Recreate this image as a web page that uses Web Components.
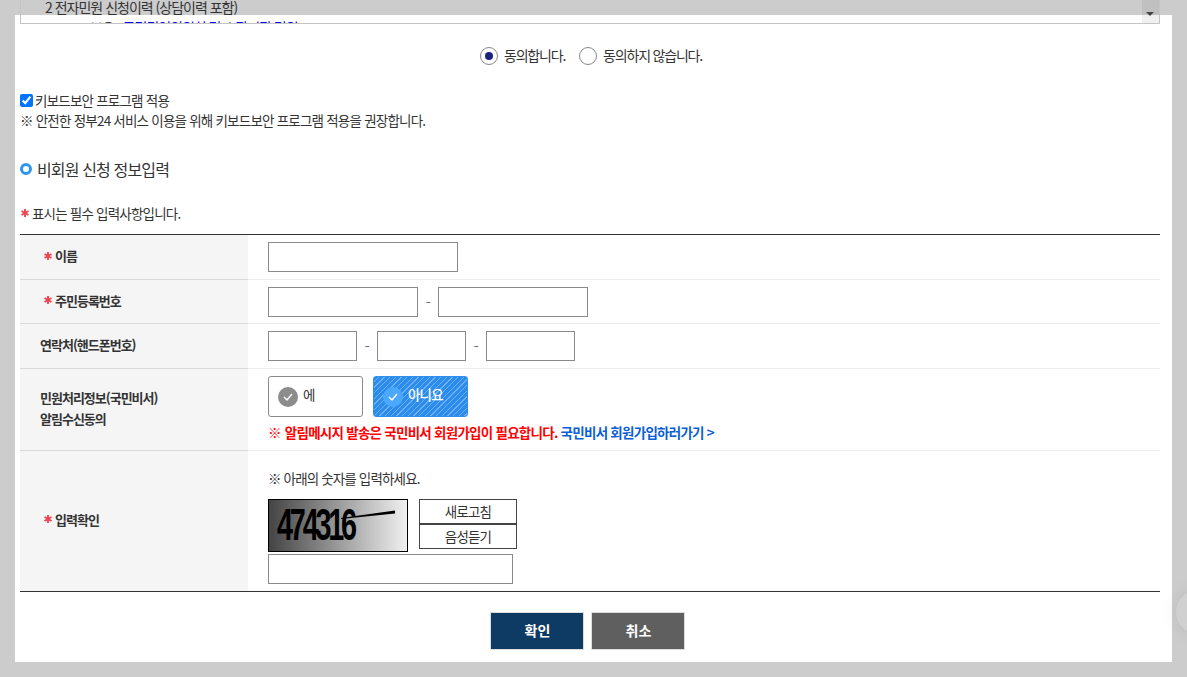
<!DOCTYPE html>
<html lang="ko">
<head>
<meta charset="utf-8">
<title>비회원 신청 정보입력</title>
<style>
html, body { margin: 0; padding: 0; height: 100%; overflow: hidden; background: #cccccc; }
body {
  font: 14px/20px "Noto Sans CJK KR", "Noto Sans", sans-serif;
  letter-spacing: -0.6px;
  color: #333;
  display: flow-root;
}
</style>
</head>
<body>

<modal-sheet>
  <terms-box></terms-box>
  <agree-radios></agree-radios>
  <keyboard-note></keyboard-note>
  <section-title>비회원 신청 정보입력</section-title>
  <required-note></required-note>

  <form-table>
    <form-row height="45" required>
      <span slot="label">이름</span>
      <text-field width="190"></text-field>
    </form-row>
    <form-row height="44" required>
      <span slot="label">주민등록번호</span>
      <field-group>
        <text-field width="150"></text-field>
        <span>-</span>
        <text-field width="150"></text-field>
      </field-group>
    </form-row>
    <form-row height="45">
      <span slot="label">연락처(핸드폰번호)</span>
      <field-group>
        <text-field width="89"></text-field>
        <span>-</span>
        <text-field width="89"></text-field>
        <span>-</span>
        <text-field width="89"></text-field>
      </field-group>
    </form-row>
    <form-row height="82" top="7">
      <span slot="label">민원처리정보(국민비서)<br>알림수신동의</span>
      <consent-choice></consent-choice>
    </form-row>
    <form-row height="140" top="17" last required>
      <span slot="label">입력확인</span>
      <captcha-box></captcha-box>
    </form-row>
  </form-table>

  <action-bar>
    <action-button color="#0d3b63">확인</action-button>
    <action-button color="#5f5f5f">취소</action-button>
  </action-bar>
</modal-sheet>
<float-tab></float-tab>

<script>
var star = `<svg class="star" width="8" height="8" viewBox="0 0 8 8"><g stroke="#ef4452" stroke-width="1.9" stroke-linecap="butt"><path d="M4 0v8"/><path d="M.5 2l7 4"/><path d="M.5 6l7-4"/></g></svg>`;

class ModalSheet extends HTMLElement {
  constructor() {
    super();
    this.attachShadow({ mode: "open" });
    this.shadowRoot.innerHTML = `
      <style>
        :host {
          display: flow-root;
          box-sizing: border-box;
          width: 1157px;
          height: 647px;
          margin: 15px 0 0 15px;
          padding: 0 12px 0 5px;
          background: #fff;
        }
      </style>
      <slot></slot>
    `;
  }
}

class TermsBox extends HTMLElement {
  constructor() {
    super();
    this.attachShadow({ mode: "open" });
    this.shadowRoot.innerHTML = `
      <style>
        :host {
          display: flex;
          box-sizing: border-box;
          height: 24px;
          margin-top: -15px;
          border: 1px solid #c4c4c4;
          border-top: 0;
          overflow: hidden;
        }
        .text { flex: 1; padding: 0 0 0 24px; font-size: 14px; line-height: 21px; letter-spacing: -1px; color: #333; margin-top: -3px; }
        .sub { padding-left: 45px; margin-top: -1px; }
        .sub b { font-weight: 400; color: #0000ee; }
        .bar { position: relative; width: 17px; background: rgba(0, 0, 0, .06); }
        .bar i {
          position: absolute; left: 4px; top: 12px;
          border: 4px solid transparent; border-top: 4px solid #444; border-bottom: 0;
        }
      </style>
      <div class="text">
        <div>2 전자민원 신청이력 (상담이력 포함)</div>
        <div class="sub">보유 : <b>국민권익위원회 및 소관기관 민원</b></div>
      </div>
      <div class="bar"><i></i></div>
    `;
  }
}

class AgreeRadios extends HTMLElement {
  constructor() {
    super();
    this.attachShadow({ mode: "open" });
    this.shadowRoot.innerHTML = `
      <style>
        :host {
          display: flex;
          justify-content: center;
          gap: 14px;
          margin: 23px 0 0 2px;
          height: 18px;
          font-size: 14px;
          line-height: 18px;
          letter-spacing: -1.2px;
          color: #333;
        }
        label { display: flex; align-items: center; gap: 6px; }
        label span { margin-top: -2px; }
        i {
          box-sizing: border-box; width: 18px; height: 18px;
          border: 1px solid #8a8a8a; border-radius: 50%;
          display: flex; align-items: center; justify-content: center;
        }
        i.on::after { content: ""; width: 8px; height: 8px; border-radius: 50%; background: #1a237e; }
      </style>
      <label><i class="on"></i><span>동의합니다.</span></label>
      <label><i></i><span>동의하지 않습니다.</span></label>
    `;
  }
}

class KeyboardNote extends HTMLElement {
  constructor() {
    super();
    this.attachShadow({ mode: "open" });
    this.shadowRoot.innerHTML = `
      <style>
        :host { display: block; margin-top: 25px; font-size: 13.5px; line-height: 21px; letter-spacing: -0.78px; color: #333; }
        label { display: flex; align-items: center; gap: 2px; height: 20px; }
        input { width: 13px; height: 13px; margin: 0; }
      </style>
      <label><input type="checkbox" checked>키보드보안 프로그램 적용</label>
      <div>※ 안전한 정부24 서비스 이용을 위해 키보드보안 프로그램 적용을 권장합니다.</div>
    `;
  }
}

class SectionTitle extends HTMLElement {
  constructor() {
    super();
    this.attachShadow({ mode: "open" });
    this.shadowRoot.innerHTML = `
      <style>
        :host { display: flex; align-items: center; gap: 5px; margin-top: 26px; height: 24px; font-size: 16px; letter-spacing: -0.85px; color: #333; }
        i { box-sizing: border-box; width: 12px; height: 12px; border: 3px solid #2f96ee; border-radius: 50%; }
      </style>
      <i></i><slot></slot>
    `;
  }
}

class RequiredNote extends HTMLElement {
  constructor() {
    super();
    this.attachShadow({ mode: "open" });
    this.shadowRoot.innerHTML = `
      <style>
        :host { display: flex; align-items: center; gap: 3px; margin-top: 22px; height: 20px; font-size: 13.5px; letter-spacing: -0.8px; color: #333; margin-bottom: 11px; }
        svg { margin-left: 1px; }
      </style>
      ${star}<span>표시는 필수 입력사항입니다.</span>
    `;
  }
}

class FormTable extends HTMLElement {
  constructor() {
    super();
    this.attachShadow({ mode: "open" });
    this.shadowRoot.innerHTML = `
      <style>
        :host { display: block; border-top: 1px solid #333; border-bottom: 1px solid #333; }
      </style>
      <slot></slot>
    `;
  }
}

class FormRow extends HTMLElement {
  constructor() {
    super();
    this.attachShadow({ mode: "open" });
    var req = this.hasAttribute("required");
    var top = this.getAttribute("top") || 0;
    this.shadowRoot.innerHTML = `
      <style>
        :host { display: grid; grid-template-columns: 228px 1fr; height: ${this.getAttribute("height")}px; }
        .label {
          display: flex; align-items: center; gap: 3px;
          padding: 0 0 3px ${req ? 24 : 20}px;
          background: #f5f5f5;
          border-bottom: 1px solid ${this.hasAttribute("last") ? "transparent" : "#d9d9d9"};
          font-size: 13px; line-height: 21px; font-weight: 700; letter-spacing: -1px; color: #333;
        }
        .cell {
          display: flex; flex-direction: column; justify-content: ${top ? "flex-start" : "center"};
          padding: ${top}px 0 0 20px;
          border-bottom: 1px solid ${this.hasAttribute("last") ? "transparent" : "#ececec"};
        }
      </style>
      <div class="label">${req ? star : ""}<span><slot name="label"></slot></span></div>
      <div class="cell"><slot></slot></div>
    `;
  }
}

class TextField extends HTMLElement {
  constructor() {
    super();
    this.attachShadow({ mode: "open" });
    this.shadowRoot.innerHTML = `
      <style>
        :host { display: block; width: ${this.getAttribute("width")}px; height: 30px; }
        input { box-sizing: border-box; display: block; width: 100%; height: 100%; margin: 0; border: 1px solid #8a8a8a; background: #fff; padding: 0 6px; outline: 0; }
      </style>
      <input type="text">
    `;
  }
}

class FieldGroup extends HTMLElement {
  constructor() {
    super();
    this.attachShadow({ mode: "open" });
    this.shadowRoot.innerHTML = `
      <style>
        :host { display: flex; align-items: center; }
        ::slotted(span) { width: 20px; text-align: center; color: #666; }
      </style>
      <slot></slot>
    `;
  }
}

class ConsentChoice extends HTMLElement {
  constructor() {
    super();
    this.attachShadow({ mode: "open" });
    var check = `<svg width="10" height="8" viewBox="0 0 10 8"><path d="M1 4l3 3 5-6" fill="none" stroke="#fff" stroke-width="1.4"/></svg>`;
    this.shadowRoot.innerHTML = `
      <style>
        :host { display: block; }
        .pair { display: flex; gap: 10px; }
        .btn {
          box-sizing: border-box; width: 95px; height: 41px;
          display: flex; align-items: center; gap: 5px; padding: 0 0 5px 9px;
          border: 1px solid #8a8a8a; border-radius: 3px;
          font-size: 13.5px; color: #333;
        }
        .btn i { width: 20px; height: 20px; margin-top: 5px; border-radius: 50%; background: #8c8c8c; display: flex; align-items: center; justify-content: center; }
        .btn.on {
          border-color: #2f8fee; color: #fff; font-weight: 500; letter-spacing: -0.8px;
          background: repeating-linear-gradient(135deg, #2c8ceb 0 3px, #6db1f3 3px 4px);
        }
        .btn.on i { background: #4aa8ff; }
        p { margin: 5px 0 0; font-size: 13.5px; line-height: 20px; font-weight: 700; letter-spacing: -0.74px; color: #ff0000; }
        p span { margin-right: 4px; }
        a { color: #0a5fd6; text-decoration: none; }
      </style>
      <div class="pair">
        <div class="btn"><i>${check}</i>에</div>
        <div class="btn on"><i>${check}</i>아니요</div>
      </div>
      <p><span>※</span>알림메시지 발송은 국민비서 회원가입이 필요합니다. <a href="#">국민비서 회원가입하러가기 &gt;</a></p>
    `;
  }
}

class CaptchaBox extends HTMLElement {
  constructor() {
    super();
    this.attachShadow({ mode: "open" });
    this.shadowRoot.innerHTML = `
      <style>
        :host { display: block; font-size: 13.5px; letter-spacing: -0.85px; color: #333; }
        .hint { line-height: 20px; margin-bottom: 11px; }
        .top { display: flex; gap: 11px; }
        .pic {
          position: relative; box-sizing: border-box; width: 140px; height: 53px; overflow: hidden;
          border: 1px solid #000;
          background: linear-gradient(90deg, #444, #f0f0f0);
        }
        .pic span {
          position: absolute; left: 8px; top: 0;
          color: #000; font: 700 36px/50px "Liberation Sans", sans-serif; letter-spacing: -4px;
          transform: scale(.8, 1.25); transform-origin: 0 50%;
        }
        .pic svg { position: absolute; left: 0; top: 0; }
        .side { display: flex; flex-direction: column; }
        .side button {
          box-sizing: border-box; width: 98px; height: 25px; margin: 0; padding: 0;
          border: 1px solid #444; background: #fff; color: #333;
          font: inherit; letter-spacing: inherit; line-height: 21px;
        }
        .answer { display: block; box-sizing: border-box; width: 245px; height: 30px; margin-top: 2px; border: 1px solid #8a8a8a; outline: 0; padding: 0 6px; }
      </style>
      <div class="hint">※ 아래의 숫자를 입력하세요.</div>
      <div class="top">
        <div class="pic"><span>474316</span><svg width="138" height="51"><path d="M72 18L126 10.4V13.4L72 19Z" fill="#000"/></svg></div>
        <div class="side"><button>새로고침</button><button>음성듣기</button></div>
      </div>
      <input class="answer" type="text">
    `;
  }
}

class ActionBar extends HTMLElement {
  constructor() {
    super();
    this.attachShadow({ mode: "open" });
    this.shadowRoot.innerHTML = `
      <style>
        :host { display: flex; justify-content: center; gap: 7px; margin: 20px 0 0 -6px; }
      </style>
      <slot></slot>
    `;
  }
}

class ActionButton extends HTMLElement {
  constructor() {
    super();
    this.attachShadow({ mode: "open" });
    this.shadowRoot.innerHTML = `
      <style>
        :host {
          display: flex; align-items: center; justify-content: center;
          box-sizing: border-box; width: 94px; height: 38px;
          padding: 0 0 2px 2px;
          border: 1px solid #ddd;
          background: ${this.getAttribute("color")};
          color: #fff; font-size: 14px; font-weight: 700; letter-spacing: 0;
        }
      </style>
      <slot></slot>
    `;
  }
}

class FloatTab extends HTMLElement {
  constructor() {
    super();
    this.attachShadow({ mode: "open" });
    this.shadowRoot.innerHTML = `
      <style>
        :host {
          position: fixed; left: 1176px; top: 590px; width: 44px; height: 44px;
          border-radius: 50%; background: #d0d0d0;
          box-shadow: 0 0 18px rgba(0, 0, 0, .08);
        }
      </style>
    `;
  }
}

customElements.define("modal-sheet", ModalSheet);
customElements.define("terms-box", TermsBox);
customElements.define("agree-radios", AgreeRadios);
customElements.define("keyboard-note", KeyboardNote);
customElements.define("section-title", SectionTitle);
customElements.define("required-note", RequiredNote);
customElements.define("form-table", FormTable);
customElements.define("form-row", FormRow);
customElements.define("text-field", TextField);
customElements.define("field-group", FieldGroup);
customElements.define("consent-choice", ConsentChoice);
customElements.define("captcha-box", CaptchaBox);
customElements.define("action-bar", ActionBar);
customElements.define("action-button", ActionButton);
customElements.define("float-tab", FloatTab);
</script>
</body>
</html>
